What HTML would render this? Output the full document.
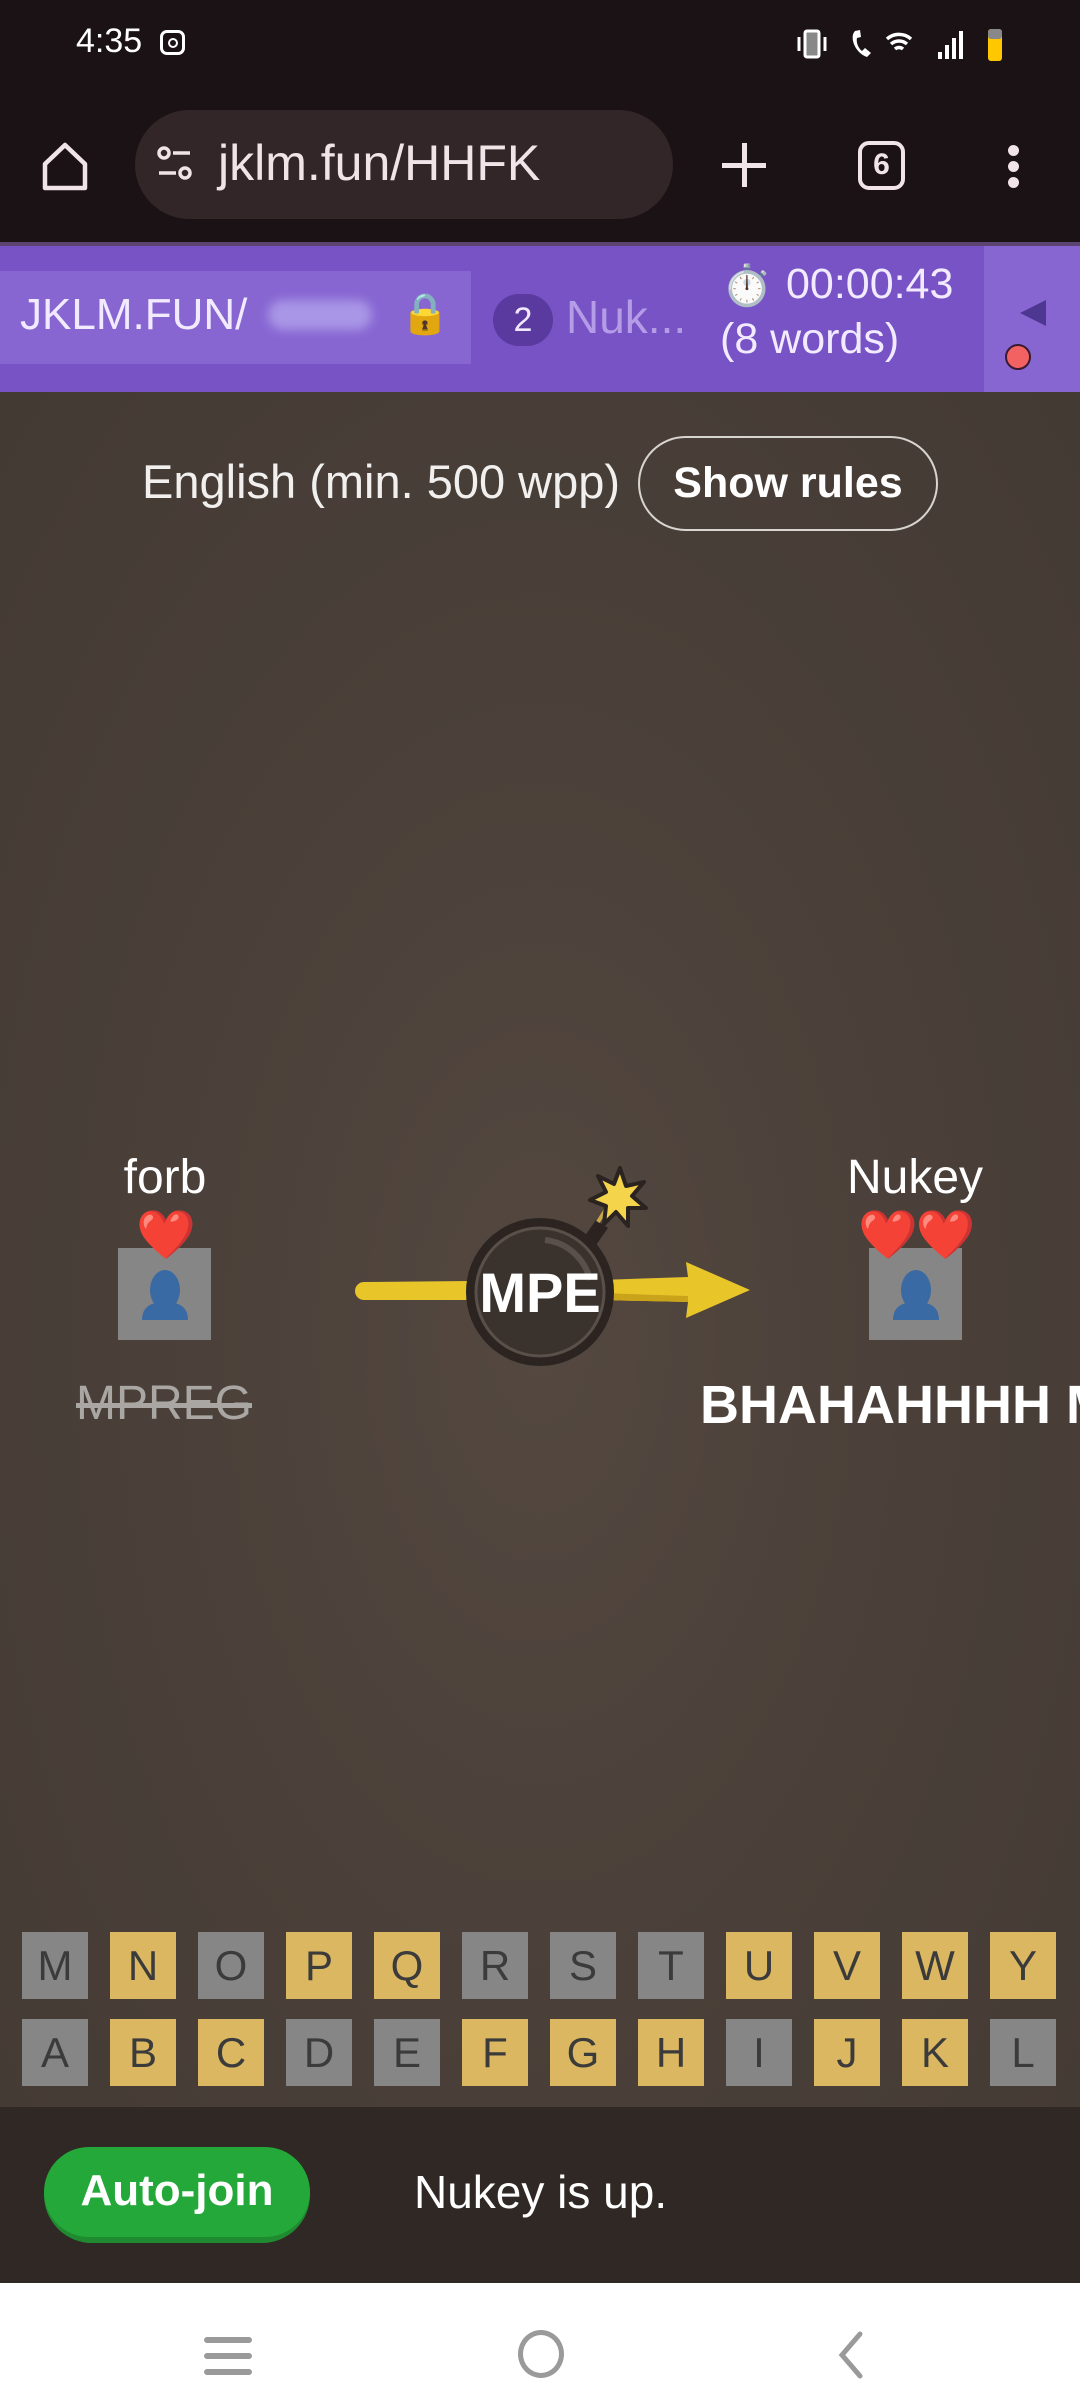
<!DOCTYPE html>
<html><head><meta charset="utf-8"><style>
*{margin:0;padding:0;box-sizing:border-box}
body{width:1080px;height:2400px;position:relative;overflow:hidden;font-family:"Liberation Sans",sans-serif;background:#1a1214}
.abs{position:absolute}
.tile{position:absolute;width:66px;height:67px;font-size:42px;color:#3b3b3b;text-align:center;line-height:67px;font-family:"Liberation Sans",sans-serif}
.g{background:#868686}.y{background:#dcb761}
</style></head><body>
<!-- status bar -->
<div class="abs" style="left:76px;top:22px;color:#fff;font-size:34px">4:35</div>
<div class="abs" style="left:160px;top:30px;width:25px;height:25px;border:3px solid #fff;border-radius:7px"><div style="width:10px;height:10px;border:2.5px solid #fff;border-radius:50%;margin:4.5px auto"></div></div>
<svg class="abs" style="left:795px;top:25px" width="220" height="40" viewBox="0 0 220 40">
<rect x="10" y="6" width="14" height="26" rx="2" fill="#888" stroke="#fff" stroke-width="3"/><path d="M4 12v14M30 12v14" stroke="#fff" stroke-width="3"/>
<path d="M60 6c-6 6 0 22 12 26l4-4-6-5-3 3c-4-3-6-9-5-13l4-1-1-7z" fill="#fff"/>
<path d="M92 14a18 18 0 0 1 24 0M96 19a12 12 0 0 1 16 0M100 24a6 6 0 0 1 8 0" stroke="#fff" stroke-width="3.5" fill="none"/>
<rect x="143" y="27" width="4" height="7" fill="#fff"/><rect x="150" y="20" width="4" height="14" fill="#fff"/><rect x="157" y="13" width="4" height="21" fill="#fff"/><rect x="164" y="6" width="4" height="28" fill="#fff"/>
<rect x="193" y="4" width="14" height="32" rx="3" fill="#ffc700"/><rect x="193" y="4" width="14" height="10" rx="3" fill="#888"/>
</svg>
<!-- browser bar -->
<svg class="abs" style="left:40px;top:140px" width="50" height="52" viewBox="0 0 50 52"><path d="M5 24L25 5l20 19v24H5z" fill="none" stroke="#f0e4e8" stroke-width="4.5" stroke-linejoin="round"/></svg>
<div class="abs" style="left:135px;top:110px;width:538px;height:109px;border-radius:55px;background:#332629"></div>
<svg class="abs" style="left:155px;top:145px" width="44" height="40"><circle cx="9" cy="8" r="5" fill="none" stroke="#f0e4e8" stroke-width="3.5"/><path d="M18 8h17M4 28h17" stroke="#f0e4e8" stroke-width="3.5"/><circle cx="30" cy="28" r="5" fill="none" stroke="#f0e4e8" stroke-width="3.5"/></svg>
<div class="abs" style="left:218px;top:134px;color:#f0e4e8;font-size:50px">jklm.fun/HHFK</div>
<div class="abs" style="left:722px;top:163px;width:44px;height:5px;background:#f0e4e8"></div>
<div class="abs" style="left:742px;top:143px;width:5px;height:44px;background:#f0e4e8"></div>
<div class="abs" style="left:858px;top:141px;width:47px;height:49px;border:4.5px solid #f0e4e8;border-radius:11px;color:#f0e4e8;font-size:30px;text-align:center;line-height:40px;font-weight:bold">6</div>
<div class="abs" style="left:1008px;top:145px;width:11px;height:11px;border-radius:50%;background:#f0e4e8"></div>
<div class="abs" style="left:1008px;top:161px;width:11px;height:11px;border-radius:50%;background:#f0e4e8"></div>
<div class="abs" style="left:1008px;top:177px;width:11px;height:11px;border-radius:50%;background:#f0e4e8"></div>
<!-- purple bar -->
<div class="abs" style="left:0;top:242px;width:1080px;height:4px;background:#5b4470"></div>
<div class="abs" style="left:0;top:246px;width:1080px;height:146px;background:#7853c6"></div>
<div class="abs" style="left:0;top:271px;width:471px;height:93px;background:#8766d2"></div>
<div class="abs" style="left:984px;top:246px;width:96px;height:146px;background:#8766d2"></div>
<div class="abs" style="left:20px;top:290px;color:#f2eaff;font-size:44px">JKLM.FUN/</div>
<div class="abs" style="left:268px;top:300px;width:104px;height:30px;background:#a996e6;border-radius:15px;filter:blur(5px)"></div>
<div class="abs" style="left:400px;top:290px;font-size:40px">🔒</div>
<div class="abs" style="left:493px;top:294px;width:60px;height:52px;border-radius:26px;background:#5a3a9e;color:#f0e8ff;font-size:34px;text-align:center;line-height:52px">2</div>
<div class="abs" style="left:566px;top:290px;color:#b49ce6;font-size:46px">Nuk...</div>
<div class="abs" style="left:722px;top:262px;font-size:40px">⏱️</div>
<div class="abs" style="left:786px;top:260px;color:#f2eaff;font-size:43px">00:00:43</div>
<div class="abs" style="left:720px;top:315px;color:#f2eaff;font-size:43px">(8 words)</div>
<div class="abs" style="left:1020px;top:300px;width:0;height:0;border-top:13px solid transparent;border-bottom:13px solid transparent;border-right:26px solid #4e3791"></div>
<div class="abs" style="left:1005px;top:344px;width:26px;height:26px;border-radius:50%;background:#f26262;border:2px solid #3a1a30"></div>
<!-- game area -->
<div class="abs" style="left:0;top:392px;width:1080px;height:1715px;background:radial-gradient(ellipse at 50% 55%,#544840 0%,#4a4039 50%,#443a34 100%)"></div>
<div class="abs" style="left:142px;top:454px;color:#f2f0ee;font-size:47px">English (min. 500 wpp)</div>
<div class="abs" style="left:638px;top:436px;width:300px;height:95px;border:2px solid #d8d4d0;border-radius:48px;color:#fff;font-size:43px;font-weight:bold;text-align:center;line-height:90px">Show rules</div>
<!-- forb -->
<div class="abs" style="left:65px;top:1150px;width:200px;text-align:center;color:#fff;font-size:48px">forb</div>
<div class="abs" style="left:118px;top:1248px;width:93px;height:92px;background:#868686"></div>
<svg class="abs" style="left:118px;top:1248px" width="93" height="92"><ellipse cx="47" cy="42" rx="15" ry="20" fill="#3a6aa3"/><path d="M24 72c0-14 10-18 23-18s23 4 23 18z" fill="#3a6aa3"/></svg>
<div class="abs" style="left:136px;top:1212px;font-size:48px;line-height:1">❤️</div>
<div class="abs" style="left:76px;top:1376px;color:#a9a6a3;font-size:48px;text-decoration:line-through;text-decoration-thickness:5px">MPREG</div>
<!-- nukey -->
<div class="abs" style="left:815px;top:1150px;width:200px;text-align:center;color:#fff;font-size:48px">Nukey</div>
<div class="abs" style="left:869px;top:1248px;width:93px;height:92px;background:#868686"></div>
<svg class="abs" style="left:869px;top:1248px" width="93" height="92"><ellipse cx="47" cy="42" rx="15" ry="20" fill="#3a6aa3"/><path d="M24 72c0-14 10-18 23-18s23 4 23 18z" fill="#3a6aa3"/></svg>
<div class="abs" style="left:858px;top:1212px;font-size:48px;line-height:1;letter-spacing:-2px">❤️❤️</div>
<div class="abs" style="left:700px;top:1374px;color:#fff;font-size:54px;font-weight:bold;white-space:nowrap">BHAHAHHHH M</div>
<!-- arrow + bomb -->
<svg class="abs" style="left:340px;top:1150px" width="420" height="260" viewBox="340 1150 420 260">
<path d="M364 1282 L470 1281 L470 1300 L364 1300 A9 9 0 0 1 364 1282z" fill="#e8c62a"/>
<path d="M600 1280 L688 1277 L686 1262 L750 1290 L686 1318 L688 1302 L600 1300z" fill="#e8c62a"/>
<path d="M600 1293 L688 1296 L688 1302 L600 1300z" fill="#c9a31a"/>
<path d="M582 1240l14-20 12 8-14 20z" fill="#2a2320"/>
<path d="M598 1222 l10-16" stroke="#c9a84a" stroke-width="4"/>
<path d="M620 1168 l6 18 18-4-12 14 14 12-18 0 0 18-12-14-12 12 2-18-16-6 16-8-8-16 16 8z" fill="#f4d44a" stroke="#2a2320" stroke-width="4" stroke-linejoin="round"/>
<circle cx="540" cy="1292" r="74" fill="#2b2420"/>
<circle cx="540" cy="1292" r="64" fill="#3a322d" stroke="#5a504a" stroke-width="3"/>
<path d="M545 1240 a52 52 0 0 1 45 40" stroke="#5a504a" stroke-width="6" fill="none"/>
</svg>
<div class="abs" style="left:440px;top:1260px;width:200px;text-align:center;color:#fff;font-size:56px;font-weight:bold">MPE</div>
<!-- bottom bar -->
<div class="abs" style="left:0;top:2107px;width:1080px;height:176px;background:#2f2824"></div>
<div class="abs" style="left:44px;top:2147px;width:266px;height:96px;border-radius:48px;background:#1f8a30"></div>
<div class="abs" style="left:44px;top:2147px;width:266px;height:90px;border-radius:45px;background:#25a83a;color:#fff;font-size:44px;font-weight:bold;text-align:center;line-height:88px">Auto-join</div>
<div class="abs" style="left:414px;top:2165px;color:#fff;font-size:46px">Nukey is up.</div>
<!-- nav -->
<div class="abs" style="left:0;top:2283px;width:1080px;height:117px;background:#fff"></div>
<div class="abs" style="left:204px;top:2337px;width:48px;height:6px;border-radius:3px;background:#9a9a9a"></div>
<div class="abs" style="left:204px;top:2353px;width:48px;height:6px;border-radius:3px;background:#9a9a9a"></div>
<div class="abs" style="left:204px;top:2369px;width:48px;height:6px;border-radius:3px;background:#9a9a9a"></div>
<div class="abs" style="left:518px;top:2330px;width:46px;height:48px;border-radius:50%;border:5px solid #9a9a9a"></div>
<svg class="abs" style="left:830px;top:2330px" width="40" height="50"><path d="M30 4L12 25l18 21" stroke="#9a9a9a" stroke-width="5" fill="none" stroke-linecap="round"/></svg>
<div class="tile g" style="left:22px;top:1932px">M</div><div class="tile y" style="left:110px;top:1932px">N</div><div class="tile g" style="left:198px;top:1932px">O</div><div class="tile y" style="left:286px;top:1932px">P</div><div class="tile y" style="left:374px;top:1932px">Q</div><div class="tile g" style="left:462px;top:1932px">R</div><div class="tile g" style="left:550px;top:1932px">S</div><div class="tile g" style="left:638px;top:1932px">T</div><div class="tile y" style="left:726px;top:1932px">U</div><div class="tile y" style="left:814px;top:1932px">V</div><div class="tile y" style="left:902px;top:1932px">W</div><div class="tile y" style="left:990px;top:1932px">Y</div>
<div class="tile g" style="left:22px;top:2019px">A</div><div class="tile y" style="left:110px;top:2019px">B</div><div class="tile y" style="left:198px;top:2019px">C</div><div class="tile g" style="left:286px;top:2019px">D</div><div class="tile g" style="left:374px;top:2019px">E</div><div class="tile y" style="left:462px;top:2019px">F</div><div class="tile y" style="left:550px;top:2019px">G</div><div class="tile y" style="left:638px;top:2019px">H</div><div class="tile g" style="left:726px;top:2019px">I</div><div class="tile y" style="left:814px;top:2019px">J</div><div class="tile y" style="left:902px;top:2019px">K</div><div class="tile g" style="left:990px;top:2019px">L</div>
</body></html>
